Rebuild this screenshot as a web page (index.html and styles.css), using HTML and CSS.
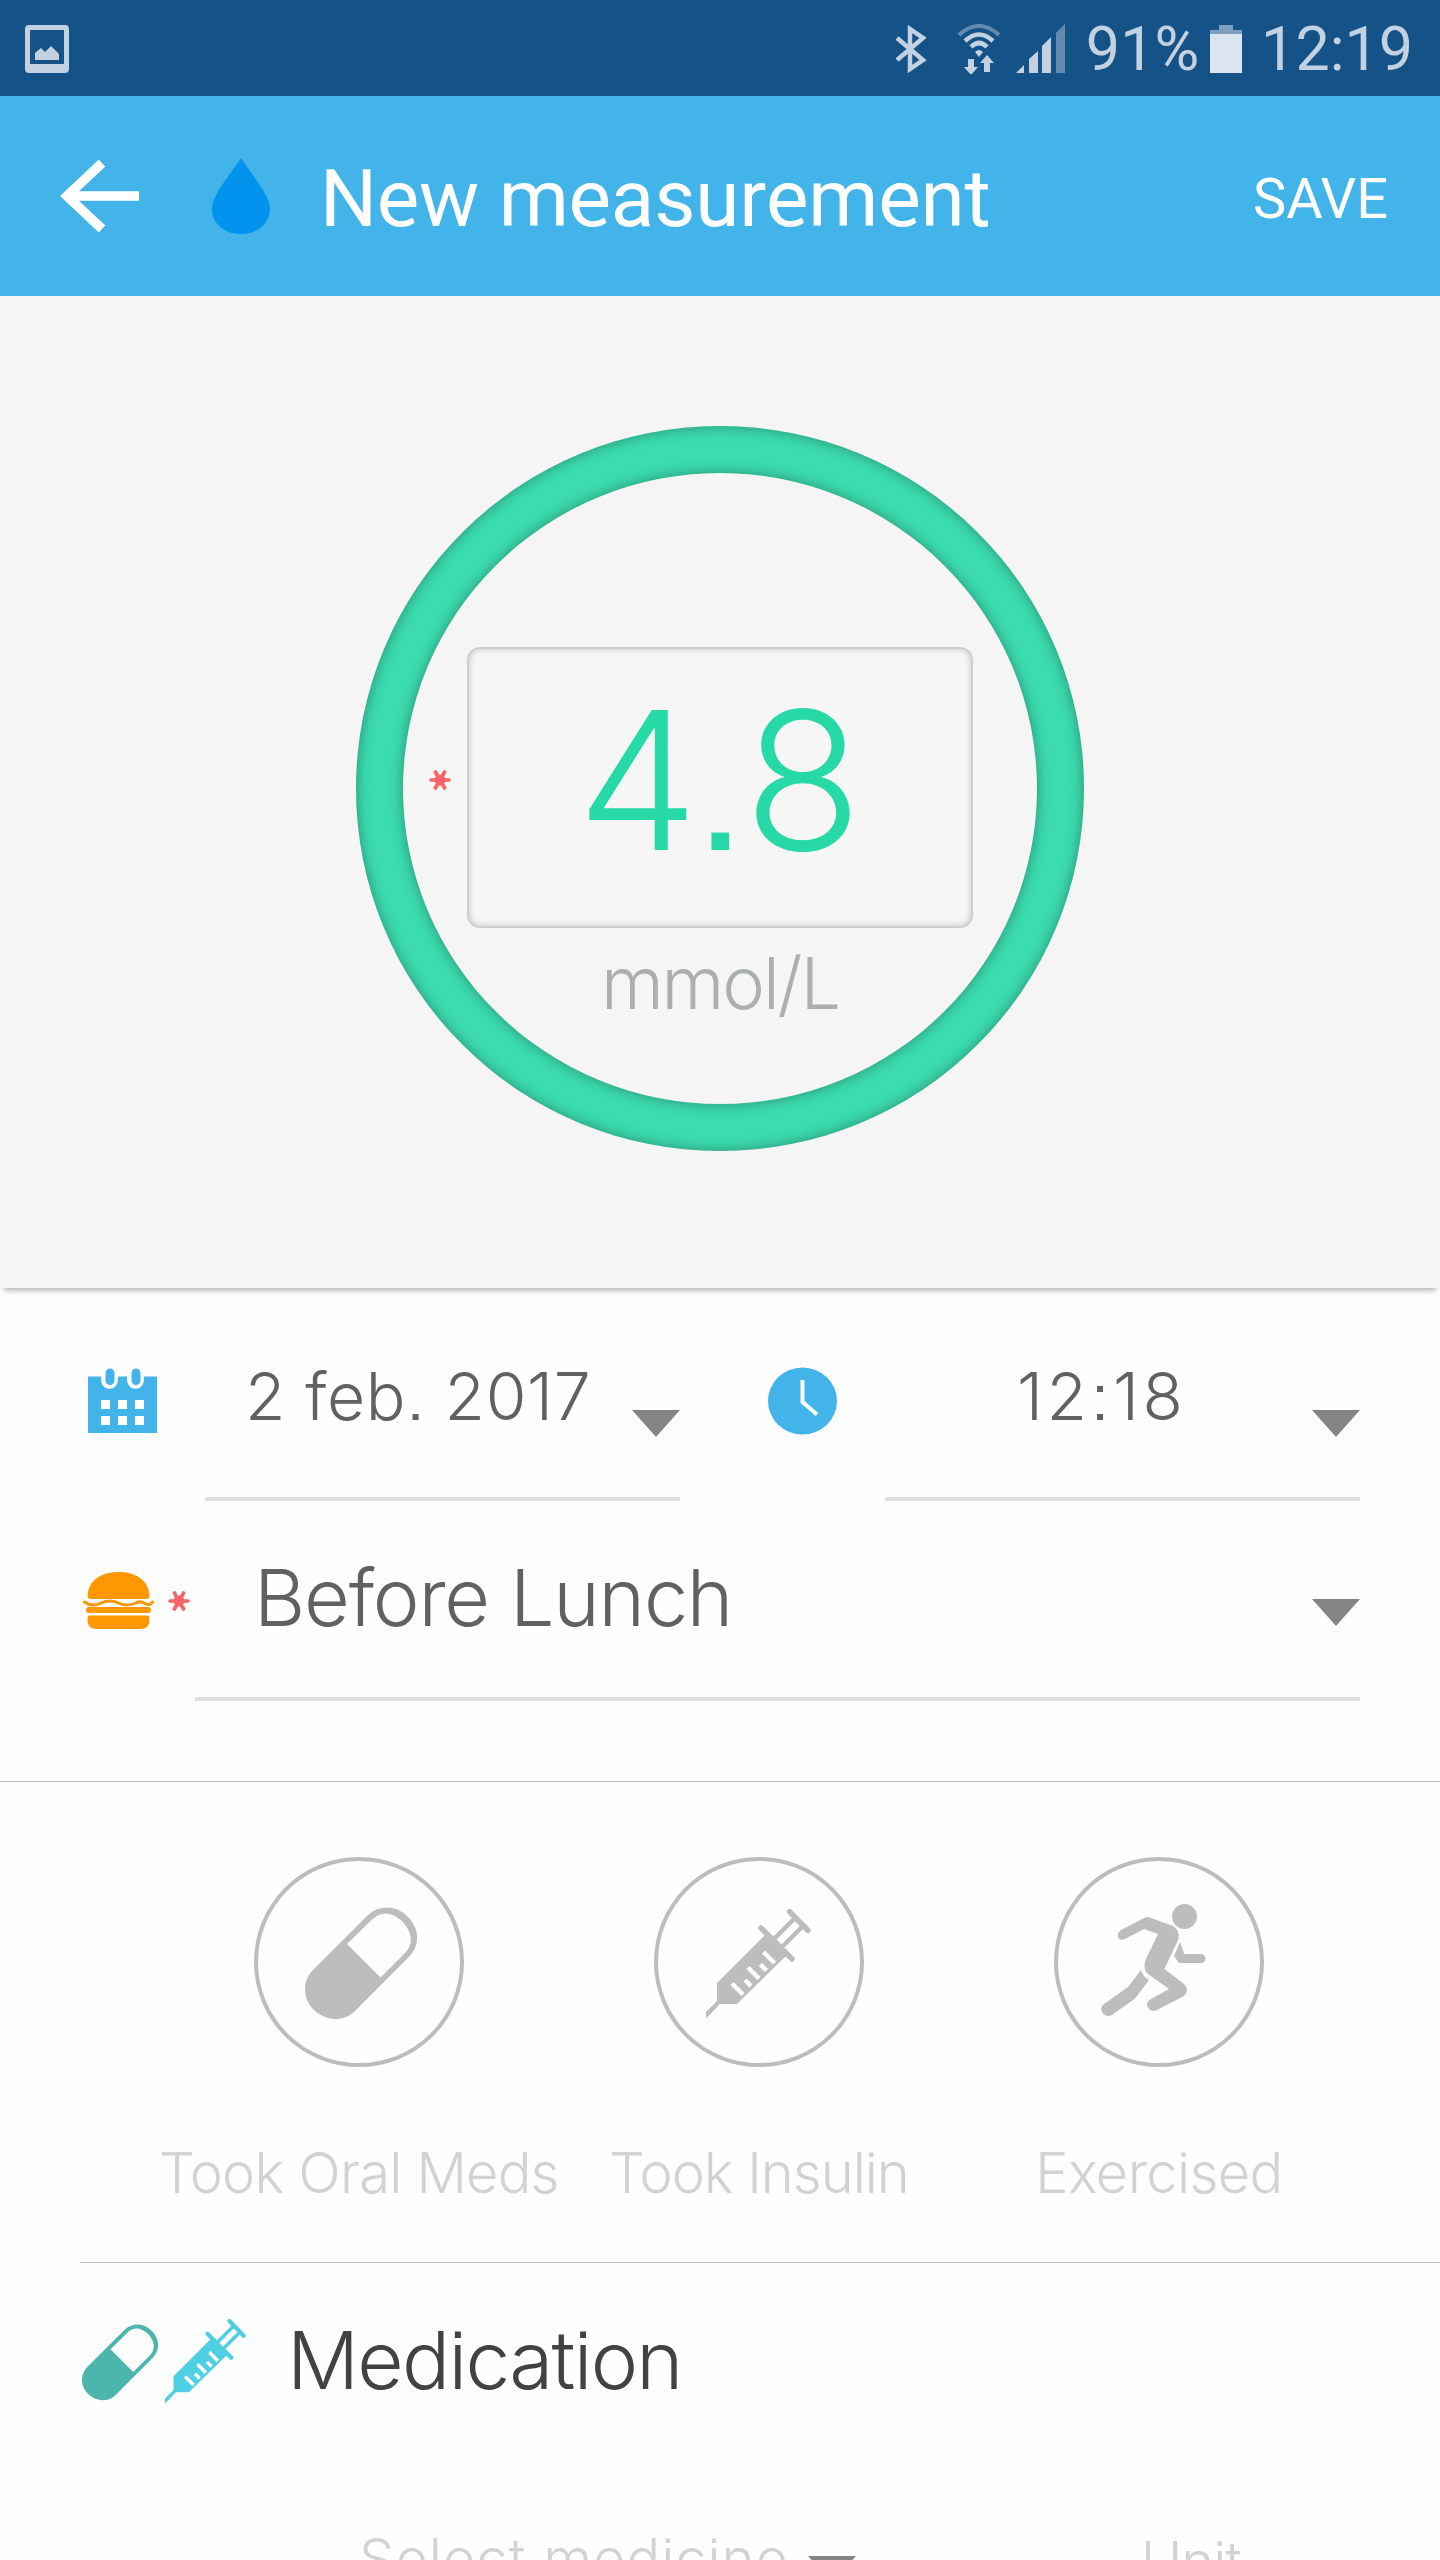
FILE: index.html
```html
<!DOCTYPE html>
<html lang="en">
<head>
    <meta charset="UTF-8">
    <meta name="viewport" content="width=device-width, initial-scale=1.0">
    <title>New measurement</title>
    <link rel="stylesheet" href="styles.css">
</head>
<body>
    <svg class="symbols" width="0" height="0">
        <symbol id="arrow" viewBox="0 0 48 27"><path d="M0 0h48L24 27z"/></symbol>
        <symbol id="asterisk" viewBox="0 0 22 20">
            <path d="M2 10H20M6.400 2l9.200 16M15.600 2L6.400 18" fill="none" stroke="currentColor" stroke-width="3.600" stroke-linecap="round"/>
            <circle cx="11" cy="10" r="5.500"/>
        </symbol>
        <symbol id="pill" viewBox="0 0 112 113">
            <path fill-rule="evenodd" d="M8.500 62.500L62.500 8.500C74 -2.500 91 -2.500 103 10C115 22 115 39 104 50L50 104C39 115 22 115 9 103C-3 91 -3 74 8.500 62.500ZM42 37L75.500 70.500L100.500 45.500C108 37 108 27 98 15C86 4 76 4 67 12.500Z"/>
        </symbol>
        <symbol id="syringe" viewBox="0 0 105 110">
            <path d="M0 103L11 92V74L59 26L80 47L31 95H14L0 109.500z"/>
            <path d="M55 19L86 50M83.500 2.500L102 21.500" fill="none" stroke="currentColor" stroke-width="5.500" stroke-linecap="round"/>
            <path d="M68 30L89 9M76 38L97 17" fill="none" stroke="currentColor" stroke-width="4.500"/>
            <path d="M26 74.500L37 85.500M42 58.500L53 69.500M57.500 43L68.500 54M39 71L45 77M54.500 55.500L60.500 61.500" fill="none" stroke="#fff" stroke-width="4.500"/>
        </symbol>
    </svg>

    <header class="status-bar">
        <svg class="screenshot-icon" width="44" height="48" viewBox="0 0 44 48">
            <path fill-rule="evenodd" d="M4 0H40Q44 0 44 4V44Q44 48 40 48H4Q0 48 0 44V4Q0 0 4 0ZM5 5V39H39V5ZM10 35V28L16 23L20 27L26 21L34 29V35Z"/>
        </svg>
        <div class="status-icons">
            <svg class="bluetooth" width="34" height="50" viewBox="0 0 34 50">
                <path d="M3 14L29 36L16 45V5L29 14L3 36" fill="none" stroke="currentColor" stroke-width="4.500"/>
            </svg>
            <svg class="wifi" width="44" height="50" viewBox="0 0 44 50">
                <g fill="none" stroke="currentColor">
                    <path d="M2 11Q22 -7 42 11" stroke-width="4" opacity=".45"/>
                    <path d="M8 17Q22 4 36 17M14 23Q22 15 30 23" stroke-width="4.500"/>
                </g>
                <path d="M22 33L18 28Q22 24 26 28ZM11 35H17V43H21L14 51L7 43H11ZM27 48H33V39H37L30 31L23 39H27Z"/>
            </svg>
            <svg class="signal" width="50" height="50" viewBox="0 0 50 50">
                <path d="M0 49L8 41V49ZM13 49V35L22 27V49ZM26 49V22L35 13V49Z"/>
                <path d="M40 49V9L49 0V49Z" opacity=".45"/>
            </svg>
            <span class="battery-level">91%</span>
            <svg class="battery" width="32" height="48" viewBox="0 0 32 48">
                <path d="M0 5H9V0H23V5H32V10H0Z" fill="#7f9fbe"/>
                <path d="M0 9H32V48H0Z" fill="#dbe5ef"/>
            </svg>
            <span class="clock">12:19</span>
        </div>
    </header>

    <nav class="app-bar">
        <svg class="back" width="79" height="72" viewBox="0 0 79 72">
            <path d="M42 3L7 36L42 69M7 36H79" fill="none" stroke="#fff" stroke-width="9.500"/>
        </svg>
        <svg class="drop" width="58" height="76" viewBox="0 0 58 76">
            <path d="M29 0C40 17 58 37 58 51C58 66 45 76 29 76S0 66 0 51C0 37 18 17 29 0Z" fill="#0093ee"/>
        </svg>
        <h1 class="title">New measurement</h1>
        <span class="save">SAVE</span>
    </nav>

    <section class="gauge-panel">
        <div class="ring">
            <svg class="required" width="22" height="20"><use href="#asterisk"/></svg>
            <div class="value-box"><span class="value">4.8</span></div>
            <div class="unit">mmol/L</div>
        </div>
    </section>

    <section class="details">
        <div class="row">
            <svg class="row-icon" width="69" height="66" viewBox="0 0 69 66">
                <path fill-rule="evenodd" fill="#42b4e9" d="M0 8.500H13V11C13 24 30 24 30 11V8.500H39V11C39 24 56 24 56 11V8.500H69V65H0ZM13 32V41H22V32ZM30 32V41H39V32ZM47 32V41H56V32ZM13 48V57H22V48ZM30 48V57H39V48ZM47 48V57H56V48Z"/>
                <path d="M22 5V12.500M48 5V12.500" stroke="#42b4e9" stroke-width="9" stroke-linecap="round"/>
            </svg>
            <div class="select date">
                <span class="date-text">2 feb. 2017</span>
                <svg class="caret" width="48" height="27"><use href="#arrow"/></svg>
            </div>
            <svg class="row-icon time-icon" width="69" height="68" viewBox="0 0 69 68">
                <ellipse cx="34.500" cy="34" rx="34.500" ry="33.500" fill="#42b4e9"/>
                <path d="M34.500 13V35L49 47.500" fill="none" stroke="#fff" stroke-width="4"/>
            </svg>
            <div class="select time">
                <span class="time-text">12:18</span>
                <svg class="caret" width="48" height="27"><use href="#arrow"/></svg>
            </div>
        </div>
        <div class="row meal-row">
            <svg class="burger" width="71" height="57" viewBox="0 0 71 57">
                <path d="M4.500 24C5 8 19 0 35.500 0S66 8 66.500 24Q66.500 27 63 27H8Q4.500 27 4.500 24Z"/>
                <path d="M1.500 30Q9 35.500 18 31Q27 27 35.500 31Q44 35 53 31Q57 28.500 62 31.500T69.500 30" fill="none" stroke="currentColor" stroke-width="3" stroke-linecap="round"/>
                <rect x="3" y="35" width="65" height="6" rx="3"/>
                <path d="M7 43.500H64Q66.500 43.500 66.500 46V48Q66.500 57 57 57H14Q4.500 57 4.500 48V46Q4.500 43.500 7 43.500Z"/>
            </svg>
            <svg class="required" width="22" height="20"><use href="#asterisk"/></svg>
            <div class="select meal">
                <span class="meal-text">Before Lunch</span>
                <svg class="caret" width="48" height="27"><use href="#arrow"/></svg>
            </div>
        </div>
    </section>

    <section class="actions">
        <div class="action">
            <div class="circle"><svg class="pill" width="112" height="113"><use href="#pill"/></svg></div>
            <span class="action-label oral">Took Oral Meds</span>
        </div>
        <div class="action">
            <div class="circle"><svg class="syringe" width="105" height="110"><use href="#syringe"/></svg></div>
            <span class="action-label insulin">Took Insulin</span>
        </div>
        <div class="action">
            <div class="circle">
                <svg class="runner" width="105" height="113" viewBox="0 0 105 113">
                    <circle cx="83.500" cy="12.500" r="12.500"/>
                    <path d="M20 26L43 14Q46 12 50 14L72 22Q79 26 77.500 35L63.500 65L83 80Q89 86 83 92L56 106C48 110 42 99 50 95L68 85L47 70Q42 66 44 57L57 30L43 25L24 35C17 38 14 30 20 26Z"/>
                    <path d="M79 38L83.500 50H100C106 50 106 59 100 59H78L73 52ZM40 66Q42 73 48 76L36 92Q35 94 32 96L11 111C3 115 -4 105 3 100L27 83Z"/>
                </svg>
            </div>
            <span class="action-label exercised">Exercised</span>
        </div>
    </section>

    <section class="medication">
        <div class="med-header">
            <svg class="med-pill" width="76" height="77"><use href="#pill"/></svg>
            <svg class="med-syringe" width="81" height="85"><use href="#syringe"/></svg>
            <h2 class="med-title">Medication</h2>
        </div>
        <div class="med-fields">
            <span class="med-select">Select medicine</span>
            <svg class="caret" width="48" height="27"><use href="#arrow"/></svg>
            <span class="med-unit">Unit</span>
        </div>
    </section>
</body>
</html>
```
FILE: styles.css
```css
* {
    box-sizing: border-box;
}
body {
    margin: 0;
    width: 1440px;
    height: 2560px;
    overflow: hidden;
    background-color: #fefefe;
    font-family: Inter, "Liberation Sans", sans-serif;
    font-weight: 300;
    font-feature-settings: "ss07";
    color: #616161;
}
svg {
    display: block;
    flex-shrink: 0;
    fill: currentColor;
}
span, h1, h2 {
    white-space: nowrap;
}
.symbols {
    position: absolute;
}

/* Status bar */
.status-bar {
    display: flex;
    justify-content: space-between;
    align-items: center;
    height: 96px;
    padding: 2px 27px 0 25px;
    background-color: #145288;
    color: #c3d1e0;
    font-family: Roboto, sans-serif;
    font-weight: 400;
    font-size: 61px;
}
.status-icons {
    display: flex;
    align-items: center;
}
.wifi {
    margin-left: 29px;
}
.signal {
    margin: 0 20px 0 15px;
}
.battery {
    margin: 0 19px 0 11px;
}

/* App bar */
.app-bar {
    display: flex;
    align-items: center;
    height: 200px;
    padding: 0 52px 0 60px;
    background-color: #42b4e9;
    color: #fff;
    font-family: Roboto, sans-serif;
}
.drop {
    margin: 0 50px 0 73px;
}
.title {
    margin: 6px 0 0;
    font-size: 80px;
    font-weight: 400;
    letter-spacing: -0.2px;
}
.save {
    margin: 5px 0 0 auto;
    font-size: 56px;
    font-weight: 400;
}

/* Gauge */
.gauge-panel {
    display: flex;
    justify-content: center;
    height: 992px;
    padding-top: 130px;
    background-color: #f5f5f5;
    box-shadow: 0 6px 6px -4px rgba(0, 0, 0, 0.35);
}
.required {
    color: #f76367;
}
.ring {
    position: relative;
    display: flex;
    flex-direction: column;
    align-items: center;
    width: 728px;
    height: 725px;
    padding-top: 221px;
    border-radius: 50%;
    background: #3cdcb0;
    box-shadow: inset 0 0 14px rgba(30, 90, 70, 0.6);
}
.ring::before {
    content: "";
    position: absolute;
    inset: 47px;
    border-radius: 50%;
    background-color: #f5f5f5;
    box-shadow: 0 0 14px rgba(30, 90, 70, 0.6);
}
.ring .required {
    position: absolute;
    left: 73px;
    top: 344px;
}
.value-box {
    position: relative;
    display: flex;
    justify-content: center;
    align-items: center;
    width: 506px;
    height: 281px;
    padding-bottom: 15px;
    border: 2px solid #cdcdcd;
    border-radius: 13px;
    background-color: #f6f6f6;
    box-shadow: inset 0 0 7px rgba(0, 0, 0, 0.2);
}
.value {
    font-size: 193px;
    line-height: 1;
    letter-spacing: 1px;
    color: #28d9a8;
}
.unit {
    position: relative;
    margin-top: 10px;
    font-size: 72px;
    line-height: 90px;
    letter-spacing: -2.1px;
    color: #abb0af;
}

/* Date, time and meal */
.details {
    height: 494px;
    padding: 20px 80px 0 83px;
    border-bottom: 1px solid #bbb;
}
.row {
    display: flex;
    height: 193px;
    padding-left: 5px;
}
.meal-row {
    height: 200px;
    padding-left: 0;
}
.row-icon {
    margin-top: 60px;
}
.time-icon {
    margin: 59px 48px 0 88px;
}
.select {
    display: flex;
    justify-content: space-between;
    border-bottom: 4px solid #e0e0e0;
}
.date {
    width: 475px;
    margin-left: 48px;
    padding-left: 40px;
}
.time {
    width: 475px;
    padding-left: 132px;
}
.date-text, .time-text {
    font-size: 66px;
    line-height: 176px;
    letter-spacing: 0.6px;
}
.time-text {
    letter-spacing: 3.6px;
}
.select .caret {
    margin-top: 102px;
    color: #858585;
}
.burger {
    margin-top: 71px;
    color: #ff9800;
}
.meal-row .required {
    margin: 90px 5px 0 14px;
}
.meal {
    flex: 1;
    padding-left: 59px;
}
.meal-text {
    font-size: 79px;
    line-height: 192px;
    letter-spacing: -1.2px;
}
.meal .caret {
    margin-top: 98px;
}

/* Actions */
.actions {
    display: grid;
    grid-template-columns: repeat(3, 400px);
    height: 480px;
    padding: 75px 0 0 159px;
}
.action {
    display: flex;
    flex-direction: column;
    align-items: center;
}
.circle {
    display: flex;
    justify-content: center;
    align-items: center;
    width: 210px;
    height: 210px;
    border: 4px solid #bdbdbd;
    border-radius: 50%;
    color: #bdbdbd;
}
.pill {
    margin: 2px 0 0 3px;
}
.syringe {
    margin: 4px 2px 0 0;
}
.runner {
    margin: 0 12px 4px 0;
}
.action-label {
    margin-top: 71px;
    font-size: 56px;
    line-height: 70px;
    letter-spacing: -0.8px;
    color: #d2d2d2;
}
.insulin {
    letter-spacing: -1px;
}
.exercised {
    letter-spacing: -0.6px;
}

/* Medication */
.medication {
    margin-left: 80px;
    border-top: 1px solid #bbb;
}
.med-header {
    display: flex;
    align-items: center;
    height: 196px;
    padding-left: 2px;
}
.med-pill {
    margin-top: 2px;
    color: #4db6ac;
}
.med-syringe {
    margin: 1px 0 0 7px;
    color: #4dd0e1;
}
.med-title {
    margin: 0 0 4px 41px;
    font-size: 80px;
    font-weight: 300;
    letter-spacing: -1.7px;
    color: #424242;
}
.med-fields {
    display: flex;
    padding: 65px 0 0 279px;
    font-size: 56px;
    line-height: 70px;
    color: #d2d2d2;
}
.med-select {
    letter-spacing: 1px;
}
.med-fields .caret {
    margin: 32px 0 0 19px;
    color: #858585;
}
.med-unit {
    margin: 3px 0 0 285px;
    letter-spacing: -1px;
}
```
